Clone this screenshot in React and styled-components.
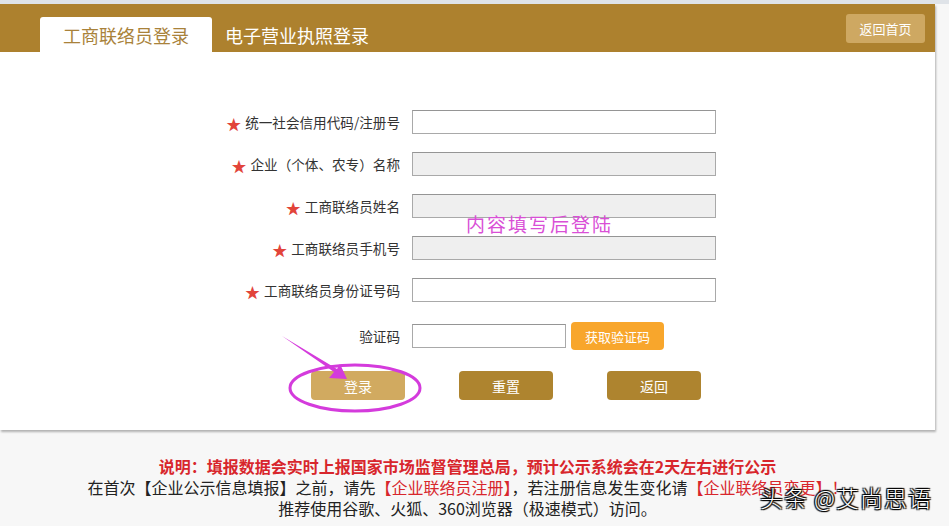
import React from "react";
import styled, { createGlobalStyle } from "styled-components";

const GlobalStyle = createGlobalStyle`
  html, body {
    margin: 0;
    padding: 0;
    background: #f7f7f7;
  }
  body {
    font-family: "Noto Sans CJK SC", "Noto Sans", sans-serif;
    color: #333;
  }
`;

const GOLD = "#ad812e";

const Page = styled.div`
  position: relative;
  width: 949px;
  height: 526px;
  overflow: hidden;
  background: #f7f7f7;
  border-top: 4px solid #dfe3e8;
  box-sizing: border-box;
`;

const Panel = styled.div`
  position: relative;
  width: 935px;
  background: #fff;
  box-shadow: 1px 2px 2px rgba(0, 0, 0, 0.28);
`;

const Header = styled.div`
  display: flex;
  align-items: flex-end;
  justify-content: space-between;
  height: 48px;
  padding-left: 40px;
  padding-right: 10px;
  background: ${GOLD};
  box-sizing: border-box;
`;

const Tabs = styled.div`
  display: flex;
  align-items: flex-end;
`;

const Tab = styled.div`
  height: 35px;
  padding: 0 ${(p) => (p.$active ? "23px" : "13px")};
  border-radius: 3px 3px 0 0;
  background: ${(p) => (p.$active ? "#fff" : "transparent")};
  color: ${(p) => (p.$active ? "#a9823a" : "#fff")};
  font-size: 18px;
  line-height: 36px;
  white-space: nowrap;
`;

const HomeButton = styled.button`
  align-self: flex-start;
  margin-top: 10px;
  width: 79px;
  height: 29px;
  border: none;
  border-radius: 3px;
  background: #cea862;
  color: #fff;
  font-family: inherit;
  font-size: 13px;
  padding: 0;
`;

const Form = styled.div`
  position: relative;
  padding: 58px 0 30px;
`;

const Row = styled.div`
  display: grid;
  grid-template-columns: 400px auto;
  column-gap: 12px;
  align-items: center;
  height: 24px;
  margin-bottom: ${(p) => p.$gap ?? 18}px;
`;

const Label = styled.label`
  display: flex;
  justify-content: flex-end;
  align-items: center;
  font-size: 13.6px;
  color: #333;
  white-space: nowrap;
`;

const Star = styled.span`
  color: #e2443a;
  font-size: 15px;
  margin-right: 4px;
  line-height: 1;
  position: relative;
  top: 1px;
`;

const Input = styled.input`
  box-sizing: border-box;
  width: ${(p) => p.$w || 304}px;
  height: 24px;
  margin: 0;
  border: 1px solid #a9a9a9;
  border-top-color: #959595;
  background: ${(p) => (p.disabled ? "#efefef" : "#fff")};
`;

const CaptchaWrap = styled.div`
  display: flex;
  align-items: center;
  gap: 5px;
`;

const CaptchaButton = styled.button`
  width: 93px;
  height: 28px;
  border: none;
  border-radius: 4px;
  background: #f8a62c;
  color: #fff;
  font-family: inherit;
  font-size: 13px;
  padding: 0;
`;

const Actions = styled.div`
  display: flex;
  gap: 54px;
  padding-left: 311px;
  margin-top: 25px;
`;

const ActionButton = styled.button`
  width: 94px;
  height: 29px;
  border: none;
  border-radius: 4px;
  background: ${(p) => (p.$light ? "#d1aa60" : "#ae842f")};
  color: #fff;
  font-family: inherit;
  font-size: 14px;
  padding: 0;
`;

const Hint = styled.div`
  position: absolute;
  left: 466px;
  top: 158px;
  color: #d94fd6;
  font-size: 19px;
  letter-spacing: 2px;
  white-space: nowrap;
`;

const Markup = styled.svg`
  position: absolute;
  left: 0;
  top: 0;
  pointer-events: none;
`;

const Notes = styled.div`
  width: 935px;
  padding-top: 26px;
  text-align: center;
  font-size: 16px;
  line-height: 21px;
  color: #222;
  white-space: nowrap;
`;

const NoteTitle = styled.div`
  color: #d8262c;
  font-weight: bold;
  font-size: 16px;
`;

const Red = styled.span`
  color: #d8262c;
`;

const Watermark = styled.div`
  position: absolute;
  left: 760px;
  top: 476px;
  color: #fff;
  font-size: 23px;
  font-weight: 300;
  letter-spacing: 1px;
  white-space: nowrap;
  text-shadow: 0 0 1px #000, 1px 1px 1px #000, -1px -1px 1px #000, 1px -1px 1px #000, -1px 1px 1px #000;
`;

const fields = [
  { label: "统一社会信用代码/注册号" },
  { label: "企业（个体、农专）名称", disabled: true },
  { label: "工商联络员姓名", disabled: true },
  { label: "工商联络员手机号", disabled: true },
  { label: "工商联络员身份证号码" }
];

export default function App() {
  return (
    <Page>
      <GlobalStyle />
      <Panel>
        <Header>
          <Tabs>
            <Tab $active>工商联络员登录</Tab>
            <Tab>电子营业执照登录</Tab>
          </Tabs>
          <HomeButton>返回首页</HomeButton>
        </Header>
        <Form>
          {fields.map((f, i) => (
            <Row key={i} $gap={i === fields.length - 1 ? 20 : 18}>
              <Label>
                <Star>★</Star>
                {f.label}
              </Label>
              <Input disabled={f.disabled} />
            </Row>
          ))}
          <Row $gap={0}>
            <Label>验证码</Label>
            <CaptchaWrap>
              <Input $w={154} />
              <CaptchaButton>获取验证码</CaptchaButton>
            </CaptchaWrap>
          </Row>
          <Actions>
            <ActionButton $light>登录</ActionButton>
            <ActionButton>重置</ActionButton>
            <ActionButton>返回</ActionButton>
          </Actions>
          <Hint>内容填写后登陆</Hint>
          <Markup width="935" height="380">
            <ellipse cx="355" cy="336" rx="65" ry="23" fill="none" stroke="#d43bdc" strokeWidth="3" />
            <polygon points="282,284 337,317 340,312 347,327 329,326 334,320" fill="#d43bdc" />
          </Markup>
        </Form>
      </Panel>
      <Notes>
        <NoteTitle>说明：填报数据会实时上报国家市场监督管理总局，预计公示系统会在2天左右进行公示</NoteTitle>
        <div>
          在首次【企业公示信息填报】之前，请先<Red>【企业联络员注册】</Red>，若注册信息发生变化请<Red>【企业联络员变更】！</Red>
        </div>
        <div>推荐使用谷歌、火狐、360浏览器（极速模式）访问。</div>
      </Notes>
      <Watermark>头条 @艾尚思语</Watermark>
    </Page>
  );
}
